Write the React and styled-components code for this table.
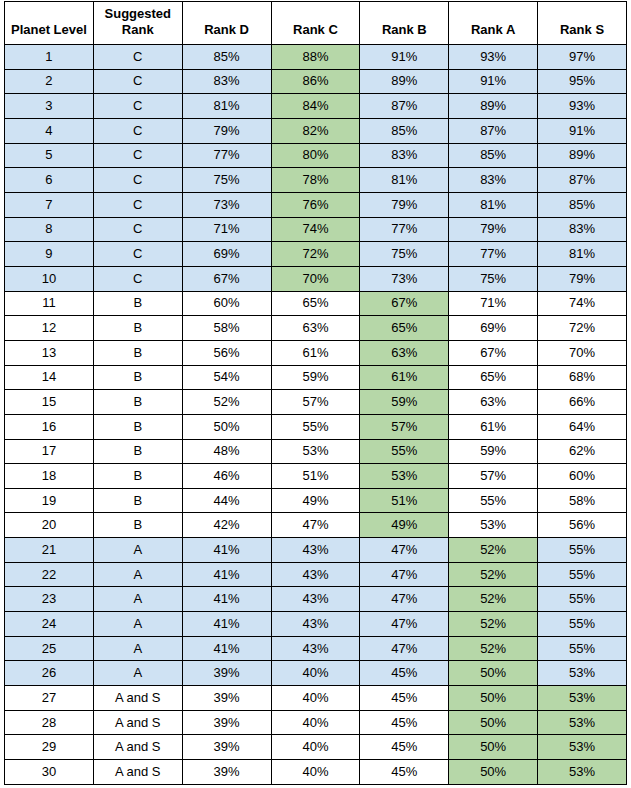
import React from "react";
import styled, { createGlobalStyle } from "styled-components";

const Global = createGlobalStyle`
  html, body { margin: 0; padding: 0; background: #fff; }
  body { font-family: "Liberation Sans", Arial, sans-serif; }
`;

const Page = styled.div`
  padding: 1px 0 0 4px;
`;

const Table = styled.table`
  border-collapse: collapse;
  table-layout: fixed;
  width: 623px;
  font-family: "Liberation Sans", Arial, sans-serif;
  font-size: 13px;
  color: #000;
`;

const Head = styled.th`
  border: 1px solid #000;
  height: 36px;
  padding: 0 2px 6px;
  vertical-align: bottom;
  text-align: center;
  font-weight: bold;
  line-height: 16px;
  background: #fff;
`;

const Row = styled.tr`
  background: ${(p) => (p.$tone === "blue" ? "#cfe2f3" : "#ffffff")};
`;

const Cell = styled.td`
  border: 1px solid #000;
  height: 23.67px;
  padding: 0 2px;
  text-align: center;
  vertical-align: middle;
  line-height: 16px;
  background: ${(p) => (p.$hl ? "#b6d7a8" : "transparent")};
`;

const headers = ["Planet Level", "Suggested Rank", "Rank D", "Rank C", "Rank B", "Rank A", "Rank S"];

const rows = [
  [1, "C", 85, 88, 91, 93, 97],
  [2, "C", 83, 86, 89, 91, 95],
  [3, "C", 81, 84, 87, 89, 93],
  [4, "C", 79, 82, 85, 87, 91],
  [5, "C", 77, 80, 83, 85, 89],
  [6, "C", 75, 78, 81, 83, 87],
  [7, "C", 73, 76, 79, 81, 85],
  [8, "C", 71, 74, 77, 79, 83],
  [9, "C", 69, 72, 75, 77, 81],
  [10, "C", 67, 70, 73, 75, 79],
  [11, "B", 60, 65, 67, 71, 74],
  [12, "B", 58, 63, 65, 69, 72],
  [13, "B", 56, 61, 63, 67, 70],
  [14, "B", 54, 59, 61, 65, 68],
  [15, "B", 52, 57, 59, 63, 66],
  [16, "B", 50, 55, 57, 61, 64],
  [17, "B", 48, 53, 55, 59, 62],
  [18, "B", 46, 51, 53, 57, 60],
  [19, "B", 44, 49, 51, 55, 58],
  [20, "B", 42, 47, 49, 53, 56],
  [21, "A", 41, 43, 47, 52, 55],
  [22, "A", 41, 43, 47, 52, 55],
  [23, "A", 41, 43, 47, 52, 55],
  [24, "A", 41, 43, 47, 52, 55],
  [25, "A", 41, 43, 47, 52, 55],
  [26, "A", 39, 40, 45, 50, 53],
  [27, "A and S", 39, 40, 45, 50, 53],
  [28, "A and S", 39, 40, 45, 50, 53],
  [29, "A and S", 39, 40, 45, 50, 53],
  [30, "A and S", 39, 40, 45, 50, 53],
];

// column indices (2..6 = D..S) highlighted per suggested rank
const hlFor = (lvl) => {
  if (lvl <= 10) return [3];
  if (lvl <= 20) return [4];
  if (lvl <= 26) return [5];
  return [5, 6];
};

const toneFor = (lvl) => (lvl <= 10 || (lvl >= 21 && lvl <= 26) ? "blue" : "white");

export default function App() {
  return (
    <Page>
      <Global />
      <Table>
        <thead>
          <tr>
            {headers.map((h) => (
              <Head key={h}>
                {h === "Suggested Rank" ? (
                  <>
                    Suggested
                    <br />
                    Rank
                  </>
                ) : (
                  h
                )}
              </Head>
            ))}
          </tr>
        </thead>
        <tbody>
          {rows.map((r) => {
            const hl = hlFor(r[0]);
            return (
              <Row key={r[0]} $tone={toneFor(r[0])}>
                {r.map((v, i) => (
                  <Cell key={i} $hl={hl.includes(i)}>
                    {i >= 2 ? `${v}%` : v}
                  </Cell>
                ))}
              </Row>
            );
          })}
        </tbody>
      </Table>
    </Page>
  );
}
